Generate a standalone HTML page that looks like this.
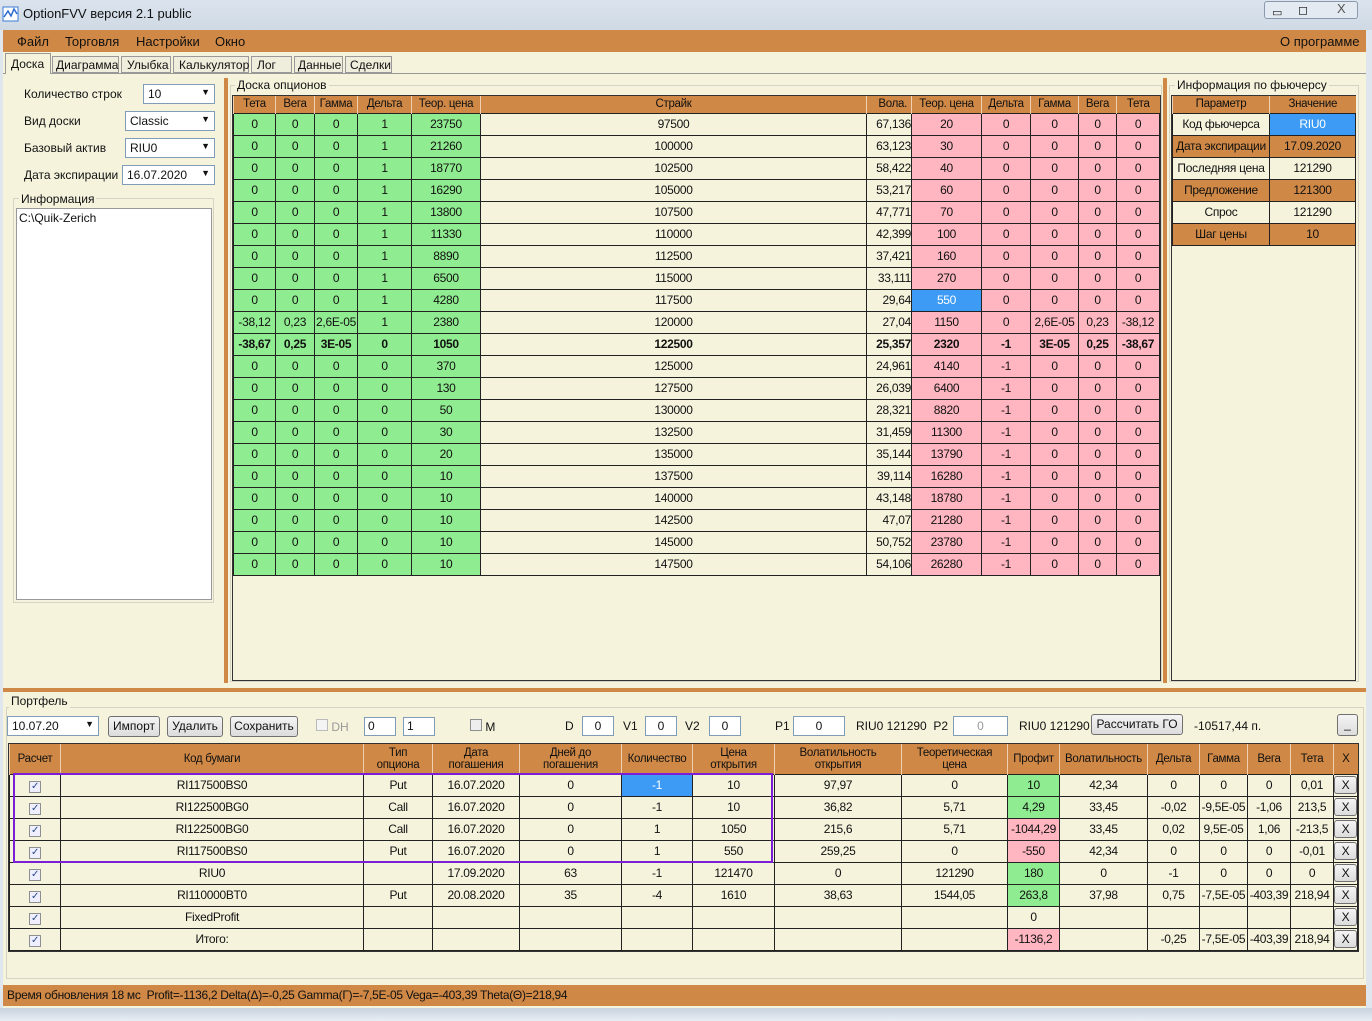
<!DOCTYPE html>
<html><head><meta charset="utf-8">
<style>
*{box-sizing:border-box;margin:0;padding:0}
body{width:1372px;height:1021px;overflow:hidden;background:#dfe6ee;font-family:"Liberation Sans",sans-serif;font-size:12px;color:#111;position:relative}
.a{position:absolute}
.or{background:#cf8845}
.cr{background:#f6f3dd}
table{border-collapse:collapse;table-layout:fixed;position:absolute}
td{border:1px solid #222;text-align:center;height:22px;white-space:nowrap;overflow:hidden;font-size:12px;letter-spacing:-0.3px}
th{background:#cf8845;font-weight:normal;border-left:1px solid #f0d0b0;font-size:11.5px;letter-spacing:-0.3px;white-space:nowrap;overflow:hidden}
.g{background:#90ec90}.p{background:#ffb6c1}.b{background:#3d9bf5;color:#fff}.c{background:#f6f3dd}.w{background:#fff}
.bold td{font-weight:bold}
.sel{border:1px solid #7f9db9;background:#fff;height:20px;font-size:12px;padding:2px 4px}
.btn{border:1px solid #707070;border-radius:3px;background:linear-gradient(#f4f4f4,#dcdcdc);text-align:center;font-size:12px;height:21px;line-height:19px}
.cb{display:inline-block;width:12px;height:12px;border:1px solid #8e8f8f;background:#eef;font-size:10px;line-height:10px;color:#2a4d8a}
.box{border:1px solid #c9c7b8;background:#fff}
</style></head><body>
<!-- title bar -->
<div class="a" style="left:0;top:0;width:1372px;height:30px;background:linear-gradient(#dbe4ee,#cfd9e4)"></div>
<svg class="a" style="left:2px;top:5px" width="18" height="18"><rect x="1" y="2" width="15" height="14" fill="#fff" stroke="#3a7bd5"/><path d="M2 12 L6 6 L9 11 L12 4 L15 9" stroke="#2a6bd0" fill="none" stroke-width="1.5"/></svg>
<div class="a" style="left:23px;top:6px;font-size:13px">OptionFVV версия 2.1 public</div>
<div class="a" style="left:1264px;top:1px;width:94px;height:18px;border:1px solid #8a99ac;border-radius:3px;background:#e4eaf1"></div>
<div class="a" style="left:1272px;top:6px;font-size:11px">▭</div><div class="a" style="left:1298px;top:3px;font-size:12px">◻</div><div class="a" style="left:1337px;top:1px;font-size:13px;color:#555">X</div>
<!-- window -->
<div class="a cr" style="left:3px;top:30px;width:1363px;height:985px"></div>
<div class="a or" style="left:3px;top:30px;width:1363px;height:22px"></div>
<div class="a" style="left:17px;top:34px;font-size:13px">Файл</div>
<div class="a" style="left:65px;top:34px;font-size:13px">Торговля</div>
<div class="a" style="left:136px;top:34px;font-size:13px">Настройки</div>
<div class="a" style="left:215px;top:34px;font-size:13px">Окно</div>
<div class="a" style="left:1280px;top:34px;font-size:13px">О программе</div>
<!-- tabs -->
<div class="a" style="left:3px;top:73px;width:1363px;height:1px;background:#999"></div>
<div class="a" style="left:5px;top:53px;width:46px;height:21px;background:#f6f3dd;border:1px solid #999;border-bottom:none;padding:3px 5px">Доска</div>
<div class="a" style="left:52px;top:56px;width:67px;height:17px;border:1px solid #999;padding:1px 3px;background:#efeddb">Диаграмма</div>
<div class="a" style="left:121px;top:56px;width:50px;height:17px;border:1px solid #999;padding:1px 5px;background:#efeddb">Улыбка</div>
<div class="a" style="left:173px;top:56px;width:76px;height:17px;border:1px solid #999;padding:1px 5px;background:#efeddb">Калькулятор</div>
<div class="a" style="left:251px;top:56px;width:41px;height:17px;border:1px solid #999;padding:1px 5px;background:#efeddb">Лог</div>
<div class="a" style="left:294px;top:56px;width:49px;height:17px;border:1px solid #999;padding:1px 3px;background:#efeddb">Данные</div>
<div class="a" style="left:345px;top:56px;width:47px;height:17px;border:1px solid #999;padding:1px 4px;background:#efeddb">Сделки</div>
<!-- left panel -->
<div class="a" style="left:24px;top:87px">Количество строк</div>
<div class="a sel" style="left:143px;top:84px;width:72px">10<span style="float:right;font-size:9px">▼</span></div>
<div class="a" style="left:24px;top:114px">Вид доски</div>
<div class="a sel" style="left:125px;top:111px;width:90px">Classic<span style="float:right;font-size:9px">▼</span></div>
<div class="a" style="left:24px;top:141px">Базовый актив</div>
<div class="a sel" style="left:125px;top:138px;width:90px">RIU0<span style="float:right;font-size:9px">▼</span></div>
<div class="a" style="left:24px;top:168px">Дата экспирации</div>
<div class="a sel" style="left:122px;top:165px;width:93px">16.07.2020<span style="float:right;font-size:9px">▼</span></div>
<div class="a" style="left:13px;top:198px;width:201px;height:405px;border:1px solid #d5d3c4"></div>
<div class="a cr" style="left:19px;top:192px;padding:0 2px">Информация</div>
<div class="a box" style="left:16px;top:208px;width:196px;height:392px;border-color:#999;padding:2px 2px">C:\Quik-Zerich</div>
<!-- splitters -->
<div class="a or" style="left:224px;top:78px;width:4px;height:605px"></div>
<div class="a or" style="left:1163px;top:78px;width:4px;height:605px"></div>
<!-- board -->
<div class="a" style="left:230px;top:85px;width:932px;height:597px;border:1px solid #d5d3c4"></div>
<div class="a cr" style="left:235px;top:78px;padding:0 2px">Доска опционов</div>
<div class="a" style="left:232px;top:95px;width:929px;height:586px;border:1px solid #333;background:#f6f3dd"></div>
<table style="left:233px;top:96px;width:926px">
<colgroup><col width="42"><col width="39"><col width="43"><col width="54"><col width="69"><col width="386"><col width="45"><col width="70"><col width="49"><col width="48"><col width="38"><col width="43"></colgroup>
<tr style="height:17px"><th>Тета</th><th>Вега</th><th>Гамма</th><th>Дельта</th><th>Теор. цена</th><th>Страйк</th><th style="text-align:right;padding-right:4px">Вола.</th><th>Теор. цена</th><th>Дельта</th><th>Гамма</th><th>Вега</th><th>Тета</th></tr>
<tr><td class="g">0</td><td class="g">0</td><td class="g">0</td><td class="g">1</td><td class="g">23750</td><td class="c">97500</td><td class="c" style="text-align:right">67,136</td><td class="p">20</td><td class="p">0</td><td class="p">0</td><td class="p">0</td><td class="p">0</td></tr>
<tr><td class="g">0</td><td class="g">0</td><td class="g">0</td><td class="g">1</td><td class="g">21260</td><td class="c">100000</td><td class="c" style="text-align:right">63,123</td><td class="p">30</td><td class="p">0</td><td class="p">0</td><td class="p">0</td><td class="p">0</td></tr>
<tr><td class="g">0</td><td class="g">0</td><td class="g">0</td><td class="g">1</td><td class="g">18770</td><td class="c">102500</td><td class="c" style="text-align:right">58,422</td><td class="p">40</td><td class="p">0</td><td class="p">0</td><td class="p">0</td><td class="p">0</td></tr>
<tr><td class="g">0</td><td class="g">0</td><td class="g">0</td><td class="g">1</td><td class="g">16290</td><td class="c">105000</td><td class="c" style="text-align:right">53,217</td><td class="p">60</td><td class="p">0</td><td class="p">0</td><td class="p">0</td><td class="p">0</td></tr>
<tr><td class="g">0</td><td class="g">0</td><td class="g">0</td><td class="g">1</td><td class="g">13800</td><td class="c">107500</td><td class="c" style="text-align:right">47,771</td><td class="p">70</td><td class="p">0</td><td class="p">0</td><td class="p">0</td><td class="p">0</td></tr>
<tr><td class="g">0</td><td class="g">0</td><td class="g">0</td><td class="g">1</td><td class="g">11330</td><td class="c">110000</td><td class="c" style="text-align:right">42,399</td><td class="p">100</td><td class="p">0</td><td class="p">0</td><td class="p">0</td><td class="p">0</td></tr>
<tr><td class="g">0</td><td class="g">0</td><td class="g">0</td><td class="g">1</td><td class="g">8890</td><td class="c">112500</td><td class="c" style="text-align:right">37,421</td><td class="p">160</td><td class="p">0</td><td class="p">0</td><td class="p">0</td><td class="p">0</td></tr>
<tr><td class="g">0</td><td class="g">0</td><td class="g">0</td><td class="g">1</td><td class="g">6500</td><td class="c">115000</td><td class="c" style="text-align:right">33,111</td><td class="p">270</td><td class="p">0</td><td class="p">0</td><td class="p">0</td><td class="p">0</td></tr>
<tr><td class="g">0</td><td class="g">0</td><td class="g">0</td><td class="g">1</td><td class="g">4280</td><td class="c">117500</td><td class="c" style="text-align:right">29,64</td><td class="b">550</td><td class="p">0</td><td class="p">0</td><td class="p">0</td><td class="p">0</td></tr>
<tr><td class="g">-38,12</td><td class="g">0,23</td><td class="g">2,6E-05</td><td class="g">1</td><td class="g">2380</td><td class="c">120000</td><td class="c" style="text-align:right">27,04</td><td class="p">1150</td><td class="p">0</td><td class="p">2,6E-05</td><td class="p">0,23</td><td class="p">-38,12</td></tr>
<tr class="bold"><td class="g">-38,67</td><td class="g">0,25</td><td class="g">3E-05</td><td class="g">0</td><td class="g">1050</td><td class="c">122500</td><td class="c" style="text-align:right">25,357</td><td class="p">2320</td><td class="p">-1</td><td class="p">3E-05</td><td class="p">0,25</td><td class="p">-38,67</td></tr>
<tr><td class="g">0</td><td class="g">0</td><td class="g">0</td><td class="g">0</td><td class="g">370</td><td class="c">125000</td><td class="c" style="text-align:right">24,961</td><td class="p">4140</td><td class="p">-1</td><td class="p">0</td><td class="p">0</td><td class="p">0</td></tr>
<tr><td class="g">0</td><td class="g">0</td><td class="g">0</td><td class="g">0</td><td class="g">130</td><td class="c">127500</td><td class="c" style="text-align:right">26,039</td><td class="p">6400</td><td class="p">-1</td><td class="p">0</td><td class="p">0</td><td class="p">0</td></tr>
<tr><td class="g">0</td><td class="g">0</td><td class="g">0</td><td class="g">0</td><td class="g">50</td><td class="c">130000</td><td class="c" style="text-align:right">28,321</td><td class="p">8820</td><td class="p">-1</td><td class="p">0</td><td class="p">0</td><td class="p">0</td></tr>
<tr><td class="g">0</td><td class="g">0</td><td class="g">0</td><td class="g">0</td><td class="g">30</td><td class="c">132500</td><td class="c" style="text-align:right">31,459</td><td class="p">11300</td><td class="p">-1</td><td class="p">0</td><td class="p">0</td><td class="p">0</td></tr>
<tr><td class="g">0</td><td class="g">0</td><td class="g">0</td><td class="g">0</td><td class="g">20</td><td class="c">135000</td><td class="c" style="text-align:right">35,144</td><td class="p">13790</td><td class="p">-1</td><td class="p">0</td><td class="p">0</td><td class="p">0</td></tr>
<tr><td class="g">0</td><td class="g">0</td><td class="g">0</td><td class="g">0</td><td class="g">10</td><td class="c">137500</td><td class="c" style="text-align:right">39,114</td><td class="p">16280</td><td class="p">-1</td><td class="p">0</td><td class="p">0</td><td class="p">0</td></tr>
<tr><td class="g">0</td><td class="g">0</td><td class="g">0</td><td class="g">0</td><td class="g">10</td><td class="c">140000</td><td class="c" style="text-align:right">43,148</td><td class="p">18780</td><td class="p">-1</td><td class="p">0</td><td class="p">0</td><td class="p">0</td></tr>
<tr><td class="g">0</td><td class="g">0</td><td class="g">0</td><td class="g">0</td><td class="g">10</td><td class="c">142500</td><td class="c" style="text-align:right">47,07</td><td class="p">21280</td><td class="p">-1</td><td class="p">0</td><td class="p">0</td><td class="p">0</td></tr>
<tr><td class="g">0</td><td class="g">0</td><td class="g">0</td><td class="g">0</td><td class="g">10</td><td class="c">145000</td><td class="c" style="text-align:right">50,752</td><td class="p">23780</td><td class="p">-1</td><td class="p">0</td><td class="p">0</td><td class="p">0</td></tr>
<tr><td class="g">0</td><td class="g">0</td><td class="g">0</td><td class="g">0</td><td class="g">10</td><td class="c">147500</td><td class="c" style="text-align:right">54,106</td><td class="p">26280</td><td class="p">-1</td><td class="p">0</td><td class="p">0</td><td class="p">0</td></tr>
</table>
<!-- futures info -->
<div class="a" style="left:1169px;top:85px;width:190px;height:597px;border:1px solid #d5d3c4"></div>
<div class="a cr" style="left:1175px;top:78px;padding:0 2px">Информация по фьючерсу</div>
<div class="a" style="left:1171px;top:95px;width:185px;height:586px;border:1px solid #333;background:#f6f3dd"></div>
<table style="left:1172px;top:96px;width:183px">
<colgroup><col width="97"><col width="86"></colgroup>
<tr style="height:17px"><th>Параметр</th><th>Значение</th></tr>
<tr><td class="c">Код фьючерса</td><td class="b">RIU0</td></tr>
<tr><td class="or">Дата экспирации</td><td class="or">17.09.2020</td></tr>
<tr><td class="c">Последняя цена</td><td class="c">121290</td></tr>
<tr><td class="or">Предложение</td><td class="or">121300</td></tr>
<tr><td class="c">Спрос</td><td class="c">121290</td></tr>
<tr><td class="or">Шаг цены</td><td class="or">10</td></tr>
</table>
<!-- portfolio -->
<div class="a or" style="left:3px;top:688px;width:1363px;height:4px"></div>
<div class="a" style="left:6px;top:707px;width:1358px;height:272px;border:1px solid #d5d3c4"></div>
<div class="a cr" style="left:9px;top:694px;padding:0 2px">Портфель</div>
<div class="a sel" style="left:7px;top:716px;width:92px">10.07.20<span style="float:right;font-size:9px">▼</span></div>
<div class="a btn" style="left:108px;top:716px;width:52px">Импорт</div>
<div class="a btn" style="left:167px;top:716px;width:56px">Удалить</div>
<div class="a btn" style="left:230px;top:716px;width:68px">Сохранить</div>
<div class="a" style="left:316px;top:719px"><span class="cb" style="background:#f4f4f4;border-color:#bbb"></span> <span style="color:#999">DH</span></div>
<div class="a sel" style="left:364px;top:717px;width:32px;height:19px;padding:1px 3px">0</div>
<div class="a sel" style="left:403px;top:717px;width:32px;height:19px;padding:1px 3px">1</div>
<div class="a" style="left:470px;top:719px"><span class="cb" style="background:#eee"></span> M</div>
<div class="a" style="left:565px;top:719px">D</div><div class="a sel" style="left:582px;top:716px;width:32px;text-align:center">0</div>
<div class="a" style="left:623px;top:719px">V1</div><div class="a sel" style="left:645px;top:716px;width:32px;text-align:center">0</div>
<div class="a" style="left:685px;top:719px">V2</div><div class="a sel" style="left:709px;top:716px;width:32px;text-align:center">0</div>
<div class="a" style="left:775px;top:719px">P1</div><div class="a sel" style="left:793px;top:716px;width:52px;text-align:center">0</div>
<div class="a" style="left:856px;top:719px">RIU0 121290&nbsp; P2</div>
<div class="a sel" style="left:953px;top:716px;width:55px;text-align:center;color:#999">0</div>
<div class="a" style="left:1019px;top:719px">RIU0 121290</div>
<div class="a btn" style="left:1091px;top:714px;width:92px">Рассчитать ГО</div>
<div class="a" style="left:1194px;top:719px">-10517,44 п.</div>
<div class="a btn" style="left:1337px;top:714px;width:21px;height:22px">_</div>
<div class="a" style="left:8px;top:743px;width:1351px;height:209px;border:1px solid #333"></div>
<table style="left:9px;top:744px;width:1348px">
<colgroup><col width="51"><col width="303"><col width="69"><col width="87"><col width="102"><col width="71"><col width="82"><col width="127"><col width="106"><col width="52"><col width="88"><col width="52"><col width="48"><col width="43"><col width="43"><col width="24"></colgroup>
<tr style="height:30px;line-height:12px"><th>Расчет</th><th>Код бумаги</th><th>Тип<br>опциона</th><th>Дата<br>погашения</th><th>Дней до<br>погашения</th><th>Количество</th><th>Цена<br>открытия</th><th>Волатильность<br>открытия</th><th>Теоретическая<br>цена</th><th>Профит</th><th>Волатильность</th><th>Дельта</th><th>Гамма</th><th>Вега</th><th>Тета</th><th>X</th></tr>
<tr class="c"><td><span class="cb">✓</span></td><td>RI117500BS0</td><td>Put</td><td>16.07.2020</td><td>0</td><td class="b">-1</td><td>10</td><td>97,97</td><td>0</td><td class="g">10</td><td>42,34</td><td>0</td><td>0</td><td>0</td><td>0,01</td><td><div class="btn" style="height:18px;line-height:16px">X</div></td></tr>
<tr class="c"><td><span class="cb">✓</span></td><td>RI122500BG0</td><td>Call</td><td>16.07.2020</td><td>0</td><td>-1</td><td>10</td><td>36,82</td><td>5,71</td><td class="g">4,29</td><td>33,45</td><td>-0,02</td><td>-9,5E-05</td><td>-1,06</td><td>213,5</td><td><div class="btn" style="height:18px;line-height:16px">X</div></td></tr>
<tr class="c"><td><span class="cb">✓</span></td><td>RI122500BG0</td><td>Call</td><td>16.07.2020</td><td>0</td><td>1</td><td>1050</td><td>215,6</td><td>5,71</td><td class="p">-1044,29</td><td>33,45</td><td>0,02</td><td>9,5E-05</td><td>1,06</td><td>-213,5</td><td><div class="btn" style="height:18px;line-height:16px">X</div></td></tr>
<tr class="c"><td><span class="cb">✓</span></td><td>RI117500BS0</td><td>Put</td><td>16.07.2020</td><td>0</td><td>1</td><td>550</td><td>259,25</td><td>0</td><td class="p">-550</td><td>42,34</td><td>0</td><td>0</td><td>0</td><td>-0,01</td><td><div class="btn" style="height:18px;line-height:16px">X</div></td></tr>
<tr class="c"><td><span class="cb">✓</span></td><td>RIU0</td><td></td><td>17.09.2020</td><td>63</td><td>-1</td><td>121470</td><td>0</td><td>121290</td><td class="g">180</td><td>0</td><td>-1</td><td>0</td><td>0</td><td>0</td><td><div class="btn" style="height:18px;line-height:16px">X</div></td></tr>
<tr class="c"><td><span class="cb">✓</span></td><td>RI110000BT0</td><td>Put</td><td>20.08.2020</td><td>35</td><td>-4</td><td>1610</td><td>38,63</td><td>1544,05</td><td class="g">263,8</td><td>37,98</td><td>0,75</td><td>-7,5E-05</td><td>-403,39</td><td>218,94</td><td><div class="btn" style="height:18px;line-height:16px">X</div></td></tr>
<tr class="c"><td><span class="cb">✓</span></td><td>FixedProfit</td><td></td><td></td><td></td><td></td><td></td><td></td><td></td><td>0</td><td></td><td></td><td></td><td></td><td></td><td><div class="btn" style="height:18px;line-height:16px">X</div></td></tr>
<tr class="c"><td><span class="cb">✓</span></td><td>Итого:</td><td></td><td></td><td></td><td></td><td></td><td></td><td></td><td class="p">-1136,2</td><td></td><td>-0,25</td><td>-7,5E-05</td><td>-403,39</td><td>218,94</td><td><div class="btn" style="height:18px;line-height:16px">X</div></td></tr>
</table>
<div class="a" style="left:13px;top:773px;width:760px;height:90px;border:2px solid #7a1fd6"></div>
<!-- status bar -->
<div class="a or" style="left:3px;top:985px;width:1363px;height:21px;padding:3px 4px;font-size:12px;letter-spacing:-0.3px">Время обновления 18 мс&nbsp; Profit=-1136,2 Delta(Δ)=-0,25 Gamma(Γ)=-7,5E-05 Vega=-403,39 Theta(Θ)=218,94</div>
<div class="a" style="left:0;top:1008px;width:1372px;height:13px;background:linear-gradient(#c8d3df,#e8eef4)"></div>
</body></html>
